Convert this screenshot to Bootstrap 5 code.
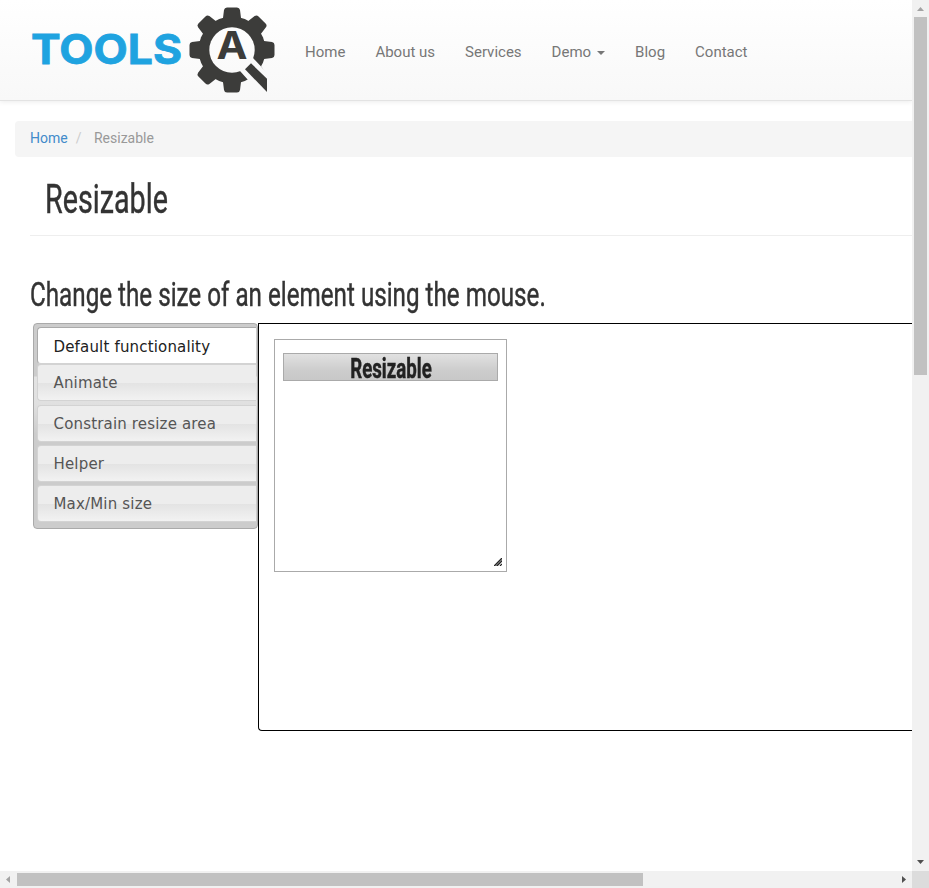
<!DOCTYPE html>
<html lang="en">
<head>
<meta charset="utf-8">
<meta name="viewport" content="width=device-width, initial-scale=1">
<title>Resizable</title>
<link href="https://cdn.jsdelivr.net/npm/bootstrap@5.3.0/dist/css/bootstrap.min.css" rel="stylesheet">
<style>
body{font-family:Roboto,"Liberation Sans",sans-serif;font-size:14px;line-height:20px;color:#333;overflow:hidden}
.frame{display:grid;grid-template:871px 17px / 912px 17px;width:929px;height:888px}
.site-nav{height:101px;background:linear-gradient(#fff,#f8f8f8);border-bottom:1px solid #e3e3e3;box-shadow:0 1px 5px rgba(0,0,0,.08);padding:0 0 0 30px}
.logo{width:260px;height:100px;display:block}
.menu{padding-top:27px}
.site-nav .nav-link{font-size:15px;line-height:20px;color:#777;padding:15px}
.dropdown-toggle::after{margin-left:6px;vertical-align:2px;border-width:4px 4px 0}
.crumbs{margin:20px 0 0 15px;height:36px;padding:8px 15px;background:#f5f5f5;border-radius:4px 0 0 4px;line-height:19px}
.crumbs a{color:#428bca}
.crumbs .active{color:#999}
.crumbs .breadcrumb-item+.breadcrumb-item{padding-left:8px}
.crumbs .breadcrumb-item+.breadcrumb-item::before{color:#ccc;padding-right:12.5px}
.narrow{display:inline-block;transform-origin:0 50%;white-space:nowrap;-webkit-text-stroke:.45px currentColor}
.page-title{margin:0 0 0 30px;padding-left:15px;height:79px;border-bottom:1px solid #eee;font-size:41px;line-height:84px;font-weight:400;color:#333}
.page-title .narrow{transform:scaleX(.7)}
.lead-line{margin:0 0 0 30px;height:87px;padding-top:38px;font-size:34px;line-height:40px;font-weight:400;color:#333}
.lead-line .narrow{transform:scaleX(.712)}
.demo{padding-left:33px}
.side-tabs{width:225px;height:206px;border:1px solid #aaa;border-radius:4px;padding:3px 0 0 3px;background:linear-gradient(#ccc 0 52px,#e3e3e3 53px,#e0e0e0 80px,#ccc 110px)}
.side-tabs a{display:block;height:37px;border:1px solid #d3d3d3;border-right:0;border-radius:4px 0 0 4px;padding-left:15.5px;font:15px/37px "DejaVu Sans",sans-serif;letter-spacing:.17px;color:#555;text-decoration:none;background:linear-gradient(#ededed 0 50%,#e3e3e3 51%,#f2f2f2);margin-bottom:3.3px;width:219px}
.side-tabs a.active{height:37.4px;margin-bottom:0;border-color:#aaa;border-bottom-color:#d3d3d3;background:#fff;color:#212121;line-height:38px}
.stage{height:408px;border:1px solid #000;border-right:0;border-radius:0 0 0 4px;padding:15px}
.sizer{width:233px;height:233px;border:1px solid #aaa;padding:13px 8px 5px}
.sizer h3{height:28px;margin:0;border:1px solid #aaa;background:linear-gradient(#e1e1e1,#ccc 65%,#c8c8c8);text-align:center;font-size:27px;line-height:30px;font-weight:700;color:#222}
.sizer h3 .narrow{transform:scaleX(.69);transform-origin:50% 50%;margin:0 -40px}
.grip{margin-right:-4px}
.sbar{background:#f1f1f1}
.sbar svg{display:block;flex:none}
.thumb-v{width:13px;height:358px;background:#c1c1c1}
.thumb-h{width:626px;height:13px;background:#c1c1c1}
.corner{background:#dcdcdc}
</style>
<script src="https://cdn.jsdelivr.net/npm/bootstrap@5.3.0/dist/js/bootstrap.bundle.min.js"></script>
</head>
<body>
<div class="frame">
  <main class="overflow-hidden bg-white">
    <nav class="site-nav d-flex align-items-start">
      <a href="#" aria-label="Tools QA">
        <svg class="logo" viewBox="30 0 260 100">
          <text x="31" y="63.5" textLength="151" lengthAdjust="spacingAndGlyphs" font-family="Inter,sans-serif" font-weight="700" font-size="41" fill="#1fa3e0" stroke="#1fa3e0" stroke-width=".8">TOOLS</text>
          <defs>
            <mask id="lens"><rect x="180" width="100" height="100" fill="#fff"/><circle cx="232" cy="50" r="22.7"/><path d="M240 71L248.300 80.300L264 98L282 86L262.700 68.300L253.300 58.300L240 50Z"/></mask>
            <path id="tooth" d="M220 22L223 18L224 10Q224.500 7.500 227 7.500H237Q239.500 7.500 240 10L241 18L244 22V32H220Z"/>
          </defs>
          <g fill="#3c3c3a">
            <g mask="url(#lens)">
              <circle cx="232" cy="50" r="33.500"/>
              <use href="#tooth"/><use href="#tooth" transform="rotate(45 232 50)"/><use href="#tooth" transform="rotate(90 232 50)"/><use href="#tooth" transform="rotate(135 232 50)"/><use href="#tooth" transform="rotate(180 232 50)"/><use href="#tooth" transform="rotate(225 232 50)"/><use href="#tooth" transform="rotate(270 232 50)"/><use href="#tooth" transform="rotate(315 232 50)"/>
            </g>
            <path d="M251 63.300L267 78.700V92L245 69.300Z"/>
            <text x="216.500" y="59" textLength="31" lengthAdjust="spacingAndGlyphs" font-family="Inter,sans-serif" font-weight="700" font-size="38">A</text>
          </g>
        </svg>
      </a>
      <ul class="nav flex-nowrap menu">
        <li class="nav-item"><a class="nav-link" href="#">Home</a></li>
        <li class="nav-item"><a class="nav-link" href="#">About us</a></li>
        <li class="nav-item"><a class="nav-link" href="#">Services</a></li>
        <li class="nav-item dropdown"><a class="nav-link dropdown-toggle" href="#">Demo</a></li>
        <li class="nav-item"><a class="nav-link" href="#">Blog</a></li>
        <li class="nav-item"><a class="nav-link" href="#">Contact</a></li>
      </ul>
    </nav>
    <ol class="breadcrumb crumbs">
      <li class="breadcrumb-item"><a class="text-decoration-none" href="#">Home</a></li>
      <li class="breadcrumb-item active">Resizable</li>
    </ol>
    <h1 class="page-title"><span class="narrow">Resizable</span></h1>
    <h2 class="lead-line"><span class="narrow">Change the size of an element using the mouse.</span></h2>
    <div class="demo d-flex align-items-start">
      <div class="side-tabs flex-shrink-0">
        <a class="active" href="#">Default functionality</a>
        <a href="#">Animate</a>
        <a href="#">Constrain resize area</a>
        <a href="#">Helper</a>
        <a href="#">Max/Min size</a>
      </div>
      <section class="stage flex-grow-1">
        <div class="sizer d-flex flex-column justify-content-between">
          <h3><span class="narrow">Resizable</span></h3>
          <svg class="grip align-self-end" width="8" height="8"><path d="M0 8L8 0V3L3 8Z" fill="#888"/><path d="M0 8L8 0M3 8L8 3M6 8L8 6" stroke="#222" stroke-width="1.200"/></svg>
        </div>
      </section>
    </div>
  </main>
  <div class="sbar d-flex flex-column align-items-center justify-content-between">
    <div>
      <svg width="13" height="17"><path d="M3 11L6.500 7L10 11Z" fill="#a3a3a3"/></svg>
      <div class="thumb-v"></div>
    </div>
    <svg width="13" height="17"><path d="M3 6H10L6.500 10Z" fill="#505050"/></svg>
  </div>
  <div class="sbar d-flex align-items-center justify-content-between">
    <div class="d-flex align-items-center">
      <svg width="17" height="13"><path d="M10 3V10L6 6.500Z" fill="#a3a3a3"/></svg>
      <div class="thumb-h"></div>
    </div>
    <svg width="17" height="13"><path d="M7 3V10L11 6.500Z" fill="#505050"/></svg>
  </div>
  <div class="corner"></div>
</div>
</body>
</html>
